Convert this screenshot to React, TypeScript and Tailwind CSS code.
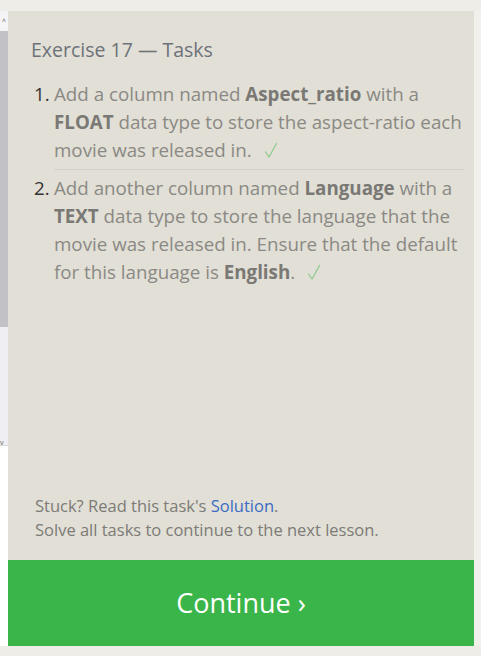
import React from "react";

const font = { fontFamily: '"Open Sans", "Noto Sans", sans-serif' };

function Check() {
  return (
    <svg width="14" height="17" viewBox="0 0 14 17" className="inline-block ml-[12px] align-[-2px]">
      <path d="M1.5 10 L5 15 L12.5 1.5" fill="none" stroke="#8fcb8f" strokeWidth="1.3" strokeLinecap="round" strokeLinejoin="round" />
    </svg>
  );
}

export default function App() {
  return (
    <div className="w-[481px] h-[656px] bg-[#efede7] flex pt-[11px] pb-[10px] overflow-hidden" style={font}>
      {/* left sliver of neighbouring pane with scrollbar */}
      <div className="w-[8px] flex flex-col bg-white">
        <div className="h-[20px] bg-[#f4f4f6] flex items-center justify-center text-[7px] text-[#555] leading-none">^</div>
        <div className="h-[296px] bg-[#c2c2c6]" />
        <div className="h-[112px] bg-[#efeff3]" />
        <div className="h-[7px] bg-[#efeff3] border-b border-[#d8d8dc] text-[7px] leading-none text-[#666]">v</div>
        <div className="flex-1 bg-white" />
      </div>

      {/* main panel */}
      <div className="w-[466px] bg-[#e1dfd6] flex flex-col">
        <div className="flex-1 pl-[23px] pr-[10px] pt-[26px]">
          <h2 className="text-[19.5px] leading-[26px] text-[#6d7279]">Exercise 17 — Tasks</h2>
          <ol className="mt-[17px] text-[18.75px] leading-[28px] text-[#8b8984]">
            <li className="flex">
              <span className="w-[23px] shrink-0 pl-[3px] text-[#333]">1.</span>
              <span className="flex-1 block pb-[5px] border-b border-[#d5d2c9]">
                Add a column named <b className="text-[#7a7874]">Aspect_ratio</b> with a{" "}
                <b className="text-[#7a7874]">FLOAT</b> data type to store the aspect-ratio each movie was released in.
                <Check />
              </span>
            </li>
            <li className="flex pt-[4px]">
              <span className="w-[23px] shrink-0 pl-[3px] text-[#333]">2.</span>
              <span className="flex-1 block">
                Add another column named <b className="text-[#7a7874]">Language</b> with a{" "}
                <b className="text-[#7a7874]">TEXT</b> data type to store the language that the movie was released in.
                Ensure that the default for this language is <b className="text-[#7a7874]">English</b>.
                <Check />
              </span>
            </li>
          </ol>
        </div>
        <div className="pl-[27px] pb-[18px] text-[16.5px] leading-[24px] text-[#7d7b77]">
          <p>
            Stuck? Read this task's <span className="text-[#3b6cc4]">Solution</span>.
          </p>
          <p>Solve all tasks to continue to the next lesson.</p>
        </div>
        <button className="h-[86px] w-full bg-[#3ab54a] text-white text-[27px] flex items-center justify-center">
          Continue ›
        </button>
      </div>

      <div className="flex-1 bg-[#f2f0eb]" />
    </div>
  );
}
